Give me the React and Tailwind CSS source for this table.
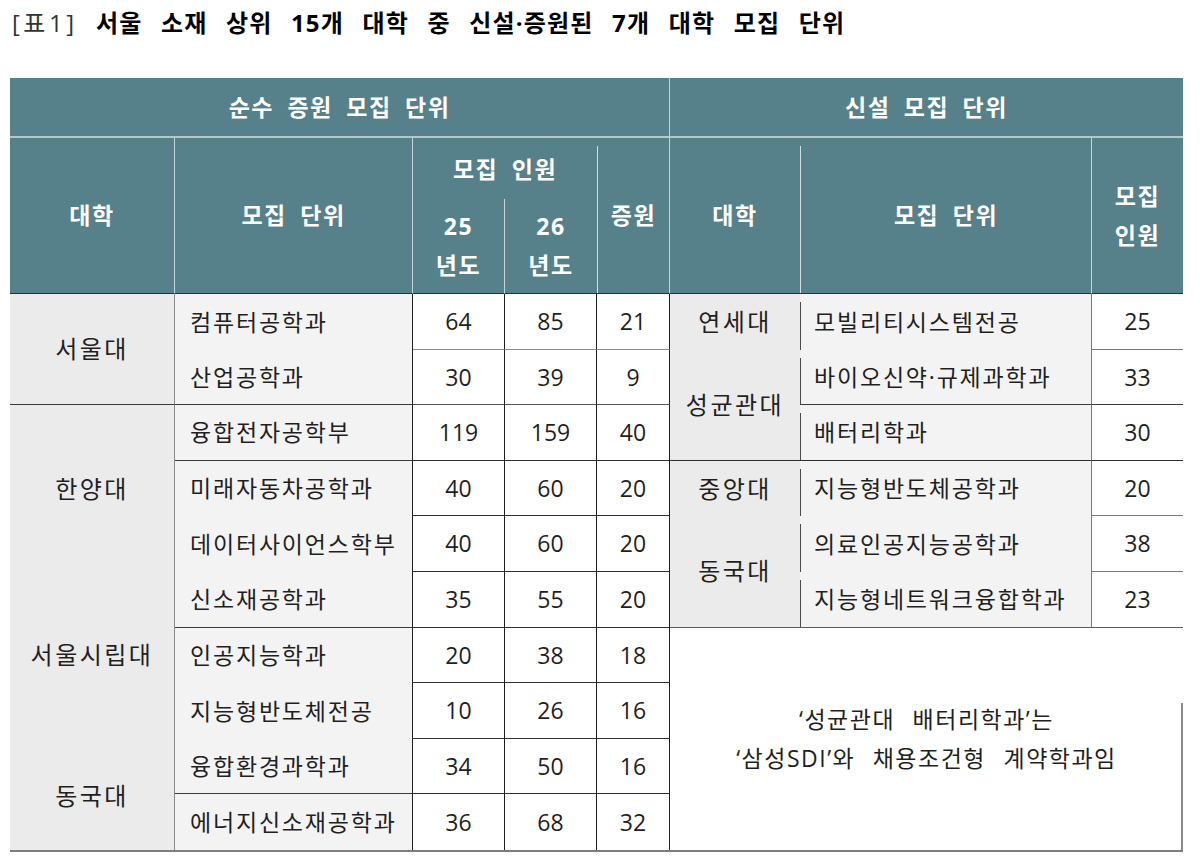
const hd = "bg-[#56808a] text-white font-bold text-[23px] tracking-[1.5px] [word-spacing:6px] flex items-center justify-center text-center";
const hdLine = "border-[#c6d5d8]";
const darkB = "border-b border-b-[#2f2f2f]";
const uni = "text-[24px] tracking-[2.5px]";
const dept = "text-[23px] tracking-[1.8px]";

const left = [
  { name: "컴퓨터공학과", a: "64", b: "85", c: "21", line: false, nb: "border-b-[#8c8c8c]" },
  { name: "산업공학과", a: "30", b: "39", c: "9", line: true, nb: "border-b-[#555]" },
  { name: "융합전자공학부", a: "119", b: "159", c: "40", line: true, nb: "border-b-[#2f2f2f]" },
  { name: "미래자동차공학과", a: "40", b: "60", c: "20", line: false, nb: "border-b-[#2f2f2f]" },
  { name: "데이터사이언스학부", a: "40", b: "60", c: "20", line: false, nb: "border-b-[#2f2f2f]" },
  { name: "신소재공학과", a: "35", b: "55", c: "20", line: true, nb: "border-b-[#2f2f2f]" },
  { name: "인공지능학과", a: "20", b: "38", c: "18", line: false, nb: "border-b-[#2f2f2f]" },
  { name: "지능형반도체전공", a: "10", b: "26", c: "16", line: false, nb: "border-b-[#2f2f2f]" },
  { name: "융합환경과학과", a: "34", b: "50", c: "16", line: true, nb: "border-b-[#2f2f2f]" },
  { name: "에너지신소재공학과", a: "36", b: "68", c: "32", line: false, nb: "" },
];

const rightUnits = [
  { name: "모빌리티시스템전공", n: "25", ub: "", nb: "border-b-[#7a7a7a]" },
  { name: "바이오신약·규제과학과", n: "33", ub: "border-b border-b-[#3a3a3a]", nb: "border-b-[#3a3a3a]" },
  { name: "배터리학과", n: "30", ub: "border-b border-b-[#2f2f2f]", nb: "border-b-[#2f2f2f]" },
  { name: "지능형반도체공학과", n: "20", ub: "", nb: "border-b-[#7a7a7a]" },
  { name: "의료인공지능공학과", n: "38", ub: "", nb: "border-b-[#7a7a7a]" },
  { name: "지능형네트워크융합학과", n: "23", ub: "border-b border-b-[#5a5a5a]", nb: "border-b-[#5a5a5a]" },
];

function Num({ v, cls, row }) {
  return (
    <div
      className={`bg-white flex items-center justify-center text-[23px] ${cls}`}
      style={{ gridRow: row }}
    >
      {v}
    </div>
  );
}

export default function App() {
  return (
    <div className="min-h-screen bg-white font-['Open_Sans','Noto_Sans_CJK_KR',sans-serif] text-[#1f1f1f] pt-[6px] pl-[10px]">
      <h1 className="text-[24px] leading-[34px] tracking-[1.2px] [word-spacing:11px] pl-[2px]">
        <span className="font-normal text-[#333] tracking-[3.5px] [word-spacing:9px]">[표1]</span>{" "}
        <span className="font-bold text-black">서울 소재 상위 15개 대학 중 신설·증원된 7개 대학 모집 단위</span>
      </h1>

      <div className="mt-[38px] w-[1173px] border-b-2 border-b-[#7d7d7d]">
        <div className="grid grid-cols-[165px_238px_92px_92px_73px_130px_292px_91px] grid-rows-[60px_61px_95px_repeat(10,55.6px)]">
          {/* header row 1 */}
          <div className={`${hd} col-[1/6] row-[1] border-b-2 border-b-[#b4c8cc] border-r ${hdLine}`}>순수 증원 모집 단위</div>
          <div className={`${hd} col-[6/9] row-[1] border-b-2 border-b-[#b4c8cc]`}>신설 모집 단위</div>

          {/* header row 2 */}
          <div className={`${hd} col-[1] row-[2/4] border-r ${hdLine} ${darkB}`}>대학</div>
          <div className={`${hd} col-[2] row-[2/4] border-r ${hdLine} ${darkB}`}>모집 단위</div>
          <div className={`${hd} col-[3/5] row-[2] pt-[2px]`}>모집 인원</div>
          <div className={`${hd} col-[3] row-[3] flex-col leading-[39px] border-r ${hdLine} ${darkB}`}>
            <span>25</span>
            <span>년도</span>
          </div>
          <div className={`${hd} col-[4] row-[3] flex-col leading-[39px] ${darkB}`}>
            <span>26</span>
            <span>년도</span>
          </div>
          <div className={`${hd} col-[5] row-[2/4] !items-stretch border-r ${hdLine} ${darkB}`}>
            <div className="w-px bg-[#d2dee0] mt-[8px]" />
            <div className="flex-1 flex items-center justify-center">증원</div>
          </div>
          <div className={`${hd} col-[6] row-[2/4] ${darkB}`}>대학</div>
          <div className={`${hd} col-[7] row-[2/4] !items-stretch border-r ${hdLine} ${darkB}`}>
            <div className="w-px bg-[#d2dee0] mt-[8px]" />
            <div className="flex-1 flex items-center justify-center">모집 단위</div>
          </div>
          <div className={`${hd} col-[8] row-[2/4] flex-col leading-[39px] ${darkB}`}>
            <span>모집</span>
            <span>인원</span>
          </div>

          {/* left: 대학 */}
          <div className={`col-[1] row-[4/6] bg-[#ebebeb] border-r border-r-[#8a8a8a] border-b border-b-[#3a3a3a] flex items-center justify-center ${uni}`}>
            서울대
          </div>
          <div className={`col-[1] row-[6/14] bg-[#ebebeb] border-r border-r-[#8a8a8a] grid grid-rows-[repeat(8,1fr)] ${uni}`}>
            <div className="row-[2] flex items-center justify-center">한양대</div>
            <div className="row-[5] flex items-center justify-center">서울시립대</div>
            <div className="row-[7/9] flex items-center justify-center pt-[3px]">동국대</div>
          </div>

          {/* left: units and numbers */}
          {left.map((r, i) => (
            <div key={r.name} className="contents">
              <div
                className={`col-[2] bg-[#f3f3f3] border-r border-r-[#1f1f1f] flex items-center pl-[15px] ${dept} ${
                  r.line ? "border-b border-b-[#3a3a3a]" : ""
                }`}
                style={{ gridRow: i + 4 }}
              >
                {r.name}
              </div>
              <Num row={i + 4} v={r.a} cls={`col-[3] border-r border-r-[#1f1f1f] ${r.nb ? "border-b " + r.nb : ""}`} />
              <Num row={i + 4} v={r.b} cls={`col-[4] border-r border-r-[#1f1f1f] ${r.nb ? "border-b " + r.nb : ""}`} />
              <Num row={i + 4} v={r.c} cls={`col-[5] border-r border-r-[#1f1f1f] ${r.nb ? "border-b " + r.nb : ""}`} />
            </div>
          ))}

          {/* right: 대학 */}
          <div className={`col-[6] row-[4] bg-[#ebebeb] flex items-center justify-center ${uni}`}>연세대</div>
          <div className={`col-[6] row-[5/7] bg-[#ebebeb] border-b border-b-[#2f2f2f] flex items-center justify-center ${uni}`}>성균관대</div>
          <div className={`col-[6] row-[7] bg-[#ebebeb] flex items-center justify-center ${uni}`}>중앙대</div>
          <div className={`col-[6] row-[8/10] bg-[#ebebeb] border-b border-b-[#5a5a5a] flex items-center justify-center ${uni}`}>동국대</div>

          {/* right: units */}
          {rightUnits.map((r, i) => (
            <div key={r.name} className="contents">
              <div
                className={`col-[7] bg-[#f3f3f3] border-r border-r-[#777] flex ${dept} ${r.ub}`}
                style={{ gridRow: i + 4 }}
              >
                <div className="w-px bg-[#4a4a4a] mt-[8px]" />
                <div className="flex-1 flex items-center pl-[13px]">{r.name}</div>
              </div>
              <Num row={i + 4} v={r.n} cls={`col-[8] border-b ${r.nb}`} />
            </div>
          ))}

          {/* note */}
          <div className="col-[6/9] row-[10/14] bg-white flex">
            <div className="flex-1 flex flex-col items-center justify-center text-[23px] leading-[39px] tracking-[1.5px] [word-spacing:10px] pl-[2px]">
              <span>‘성균관대 배터리학과’는</span>
              <span>‘삼성SDI’와 채용조건형 계약학과임</span>
            </div>
            <div className="w-[2px] bg-[#8a8a8a] mt-[75px]" />
          </div>
        </div>
      </div>
    </div>
  );
}
